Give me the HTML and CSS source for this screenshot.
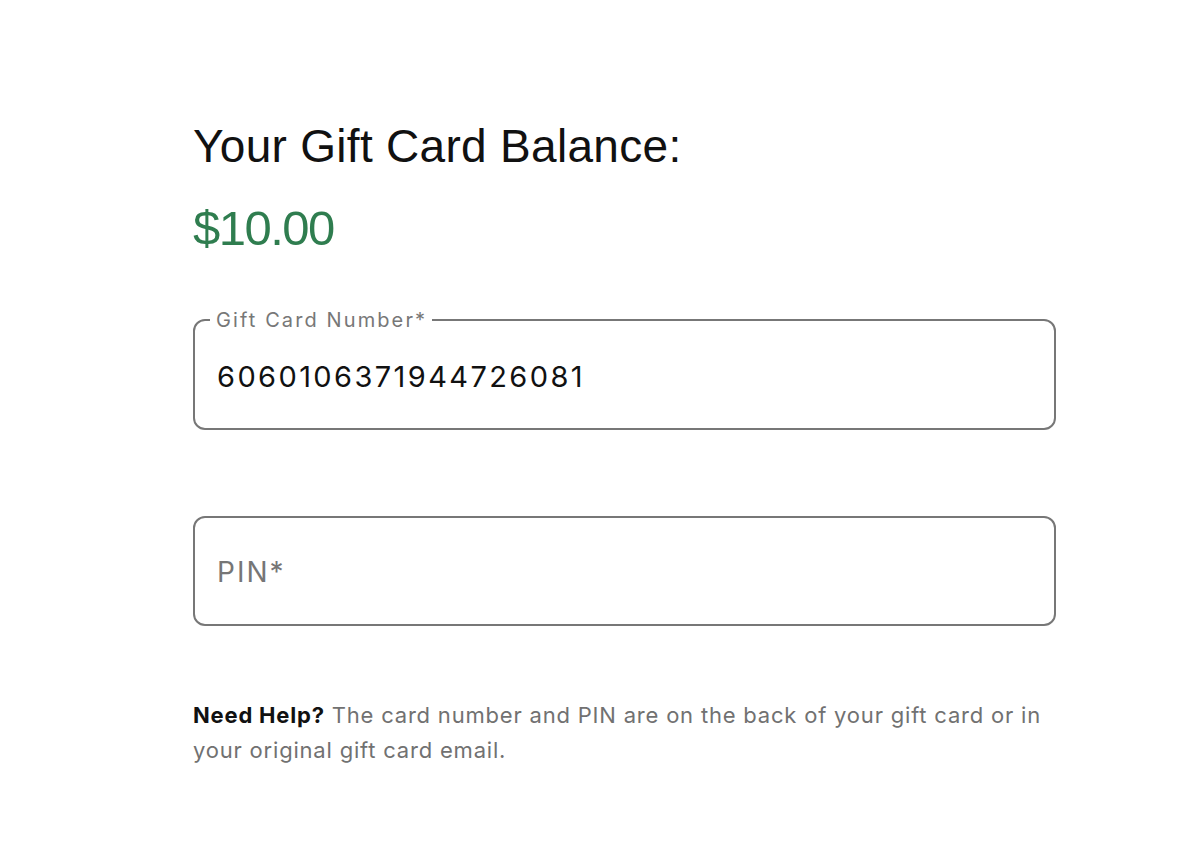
FILE: index.html
```html
<!DOCTYPE html>
<html lang="en">
<head>
<meta charset="utf-8">
<title>Gift Card Balance</title>
<link rel="stylesheet" href="styles.css">
</head>
<body>
<main class="page">
  <h1 class="title">Your Gift Card Balance:</h1>
  <p class="balance">$10.00</p>
  <div class="field field-filled">
    <fieldset class="outline"><legend class="legend">Gift Card Number*</legend></fieldset>
    <div class="value">6060106371944726081</div>
  </div>
  <div class="field field-empty">
    <fieldset class="outline"></fieldset>
    <div class="placeholder">PIN*</div>
  </div>
  <p class="help"><strong class="help-strong">Need Help?</strong> The card number and PIN are on the back of your gift card or in your original gift card email.</p>
</main>
</body>
</html>
```

FILE: styles.css
```css
html, body {
  margin: 0;
  padding: 0;
  background: #ffffff;
}
body {
  font-family: "Liberation Sans", Arial, sans-serif;
  color: #111111;
}
.page {
  width: 863px;
  padding: 116px 0 0 193px;
  display: flex;
  flex-direction: column;
}
.title {
  margin: 0;
  font-size: 46px;
  font-weight: 400;
  line-height: 60px;
  letter-spacing: 0.3px;
  color: #111111;
}
.balance {
  margin: 22px 0 0 0;
  font-size: 49px;
  line-height: 60px;
  letter-spacing: -1.5px;
  color: #2f7d4f;
}
.field {
  position: relative;
  height: 110px;
  box-sizing: border-box;
}
.field-filled {
  margin-top: 62px;
}
.field-empty {
  margin-top: 86px;
}
.outline {
  position: absolute;
  inset: -11px 0 0 0;
  margin: 0;
  padding: 0 15px;
  border: 2px solid #777777;
  border-radius: 12px;
}
.legend {
  padding: 0 5px 0 6px;
  font-family: Inter, "Liberation Sans", sans-serif;
  font-size: 20px;
  line-height: 22px;
  letter-spacing: 2.1px;
  color: #777777;
}
.field-empty .outline {
  inset: 0;
}
.value {
  position: absolute;
  left: 24px;
  top: 37px;
  font-family: Inter, "Liberation Sans", sans-serif;
  font-size: 29px;
  line-height: 40px;
  letter-spacing: 2.4px;
  color: #111111;
}
.placeholder {
  position: absolute;
  left: 24px;
  top: 36px;
  font-family: Inter, "Liberation Sans", sans-serif;
  font-size: 28px;
  line-height: 40px;
  letter-spacing: 2px;
  color: #767676;
}
.help {
  margin: 72px 0 0 0;
  font-family: Inter, "Liberation Sans", sans-serif;
  font-size: 22px;
  line-height: 35px;
  letter-spacing: 0.8px;
  color: #717171;
}
.help-strong {
  font-weight: 700;
  color: #111111;
}
```
